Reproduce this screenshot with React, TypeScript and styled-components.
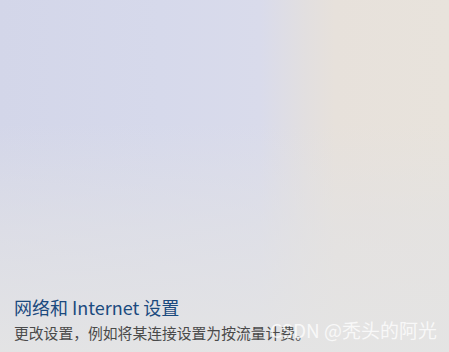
import styled, { createGlobalStyle } from "styled-components"

const GlobalStyle = createGlobalStyle`
    html, body {
        margin: 0;
        padding: 0;
        width: 449px;
        height: 352px;
        overflow: hidden;
    }
`

const Page = styled.div`
    position: relative;
    width: 449px;
    height: 352px;
    display: flex;
    flex-direction: column;
    justify-content: flex-end;
    padding: 0 0 10px 14px;
    box-sizing: border-box;
    background:
        linear-gradient(180deg, rgba(228, 228, 228, 0) 0%, rgba(228, 228, 228, 0) 35%, rgba(226, 226, 228, 0.6) 65%, rgba(228, 228, 228, 0.95) 100%),
        linear-gradient(90deg, #d3d6e9 0px, #d6d9eb 160px, #d9dbeb 260px, #e2dfe0 305px, #e7e1db 335px, #e8e3dc 449px);
    font-family: "Segoe UI", "Noto Sans CJK SC", "Noto Sans", sans-serif;
`

const Title = styled.h2`
    margin: 0 0 4px 0;
    font-size: 18px;
    font-weight: 400;
    color: #1b4a7e;
    line-height: 24px;
`

const Subtitle = styled.p`
    margin: 0;
    font-size: 14.8px;
    color: #4a4a4a;
    line-height: 19px;
`

const Watermark = styled.span`
    position: absolute;
    left: 270px;
    bottom: 10px;
    white-space: nowrap;
    font-family: "Noto Sans CJK SC", sans-serif;
    font-size: 19px;
    line-height: 24px;
    color: rgba(255, 255, 255, 0.75);
`

export default function App() {
    return (
        <>
            <GlobalStyle />
            <Page>
                <Title>网络和 Internet 设置</Title>
                <Subtitle>更改设置，例如将某连接设置为按流量计费。</Subtitle>
                <Watermark>CSDN @秃头的阿光</Watermark>
            </Page>
        </>
    )
}
